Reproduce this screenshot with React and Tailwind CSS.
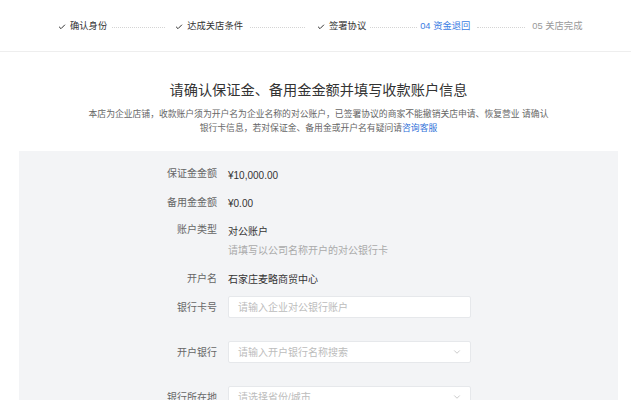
import { Check, ChevronDown } from 'lucide-react';

const font = { fontFamily: '"Liberation Sans", "Noto Sans CJK SC", sans-serif' };

function Dots({ w, ml, mr }) {
  return (
    <div
      className="border-t border-dotted border-[#d4d4d4] h-0"
      style={{ width: w, marginLeft: ml, marginRight: mr }}
    />
  );
}

function Done({ label }) {
  return (
    <div className="flex items-center text-[#333]">
      <Check size={8} strokeWidth={3} className="text-[#333] mr-[4px]" />
      <span>{label}</span>
    </div>
  );
}

function Row({ label, children, className = '' }) {
  return (
    <div className={`flex items-center ${className}`}>
      <div className="w-[209px] pr-[11px] text-right text-[#666] text-[10px] shrink-0">{label}</div>
      <div className="flex-1">{children}</div>
    </div>
  );
}

function Field({ placeholder, select }) {
  return (
    <div className="w-[243px] h-[22px] bg-white border border-[#e6e8eb] rounded-[2px] flex items-center justify-between pl-[9px] pr-[8px]">
      <span className="text-[10px] text-[#bcbcbc]">{placeholder}</span>
      {select && <ChevronDown size={10} strokeWidth={1.5} className="text-[#aaa]" />}
    </div>
  );
}

export default function App() {
  return (
    <div className="w-[631px] h-[400px] overflow-hidden bg-white" style={font}>
      {/* Steps */}
      <div className="h-[52px] border-b border-[#eeeeee] flex items-center pl-[58px] pt-[3px] text-[9.3px]">
        <Done label="确认身份" />
        <Dots w={53} ml={5} mr={10} />
        <Done label="达成关店条件" />
        <Dots w={55} ml={7} mr={12} />
        <Done label="签署协议" />
        <Dots w={47} ml={4} mr={3} />
        <span className="text-[#3b7de3]">04 资金退回</span>
        <Dots w={48} ml={7} mr={7} />
        <span className="text-[#999]">05 关店完成</span>
      </div>

      <div className="ml-[19px] w-[599px]">
        <h1 className="text-center text-[14.2px] text-[#333] leading-[20px] mt-[28px]">
          请确认保证金、备用金金额并填写收款账户信息
        </h1>
        <p className="text-center text-[8.8px] text-[#666] leading-[14px] mt-[7px]">
          本店为企业店铺，收款账户须为开户名为企业名称的对公账户，已签署协议的商家不能撤销关店申请、恢复营业 请确认
          <br />
          银行卡信息，若对保证金、备用金或开户名有疑问请<span className="text-[#2f6fd8]">咨询客服</span>
        </p>

        {/* Form panel */}
        <div className="mt-[16px] bg-[#f3f4f6] h-[260px] pt-[8px]">
          <Row label="保证金金额" className="h-[29px]">
            <span className="text-[10px] text-[#333]">¥10,000.00</span>
          </Row>
          <Row label="备用金金额" className="h-[28px]">
            <span className="text-[10px] text-[#333]">¥0.00</span>
          </Row>
          <Row label="账户类型" className="h-[27px]">
            <span className="text-[10px] text-[#333]">对公账户</span>
          </Row>
          <Row label="" className="h-[12px]">
            <span className="text-[10px] text-[#aaa]">请填写以公司名称开户的对公银行卡</span>
          </Row>
          <Row label="开户名" className="h-[28px] mt-[9px]">
            <span className="text-[10px] text-[#333]">石家庄麦略商贸中心</span>
          </Row>
          <Row label="银行卡号" className="mt-[4px]">
            <Field placeholder="请输入企业对公银行账户" />
          </Row>
          <Row label="开户银行" className="mt-[23px]">
            <Field placeholder="请输入开户银行名称搜索" select />
          </Row>
          <Row label="银行所在地" className="mt-[23px]">
            <Field placeholder="请选择省份/城市" select />
          </Row>
        </div>
      </div>
    </div>
  );
}
